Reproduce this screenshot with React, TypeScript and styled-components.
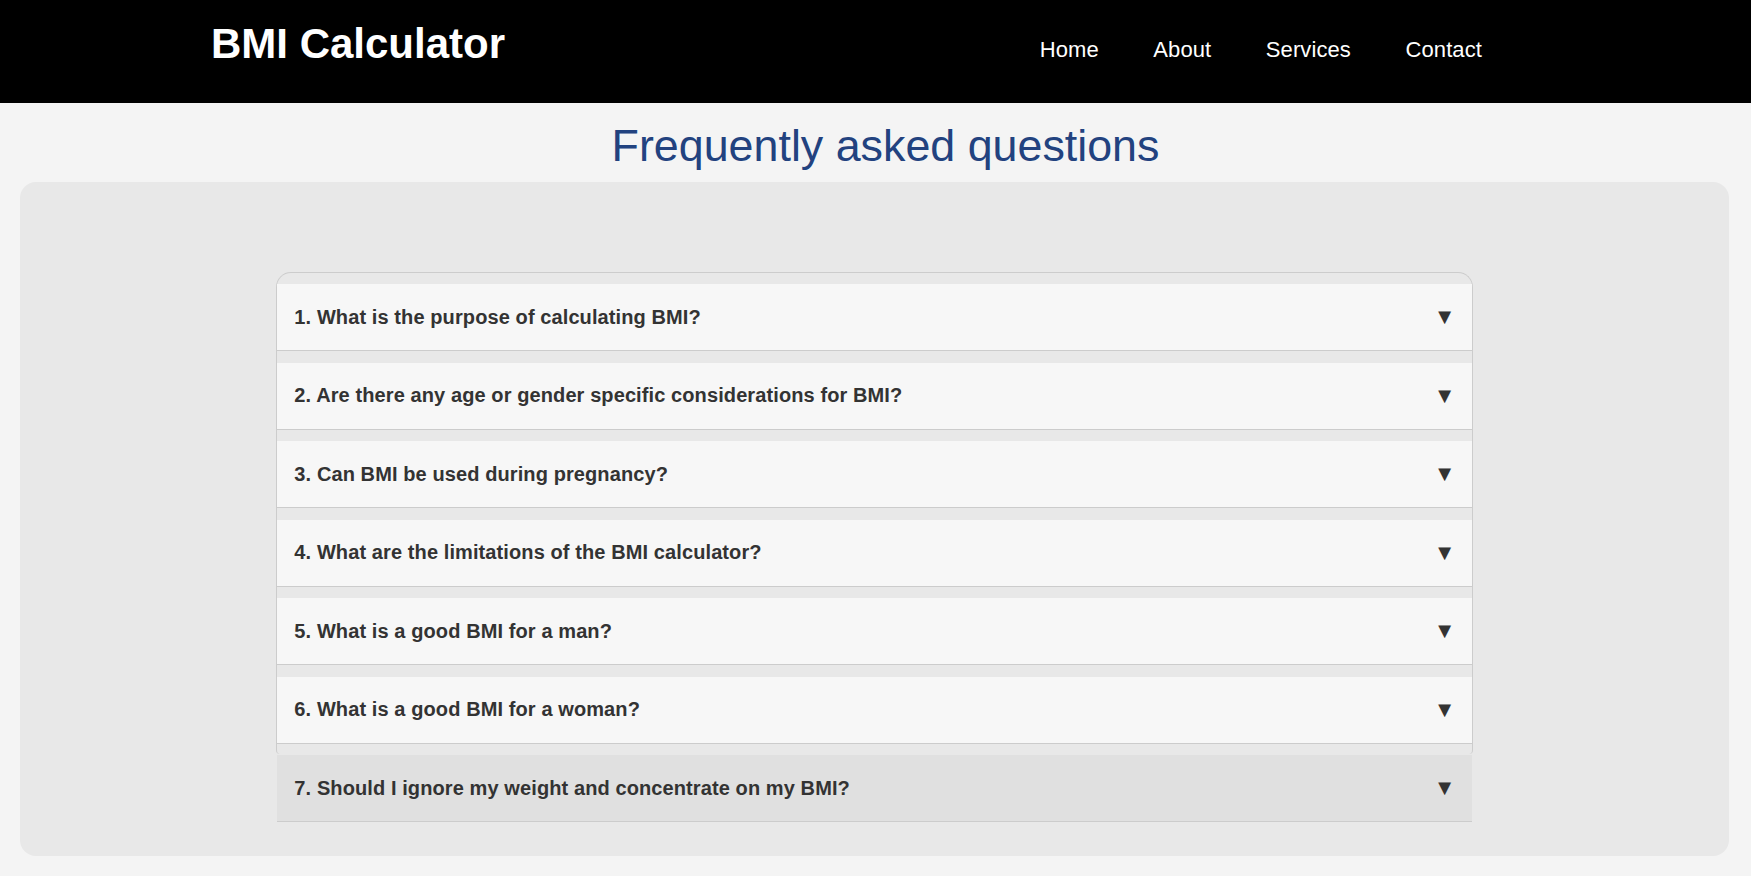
import React from "react";
import styled, { createGlobalStyle } from "styled-components";

const GlobalStyle = createGlobalStyle`
  html, body {
    margin: 0;
    padding: 0;
    background: #f4f4f4;
    font-family: "Liberation Sans", Arial, sans-serif;
  }
  * { box-sizing: border-box; }
`;

const Header = styled.header`
  display: flex;
  justify-content: space-between;
  align-items: flex-start;
  height: 103px;
  background: #000;
  padding: 0 269px 0 211px;
`;

const Logo = styled.h1`
  margin: 0;
  padding-top: 20px;
  color: #fff;
  font-size: 42px;
  font-weight: bold;
  line-height: normal;
`;

const Nav = styled.nav`
  display: flex;
  gap: 54.5px;
  padding-top: 37px;
`;

const NavLink = styled.a`
  color: #fff;
  font-size: 22px;
  line-height: normal;
  text-decoration: none;
  letter-spacing: 0.1px;
`;

const Title = styled.h2`
  margin: 17px 0 10.5px;
  padding-left: 20px;
  text-align: center;
  color: #22427f;
  font-size: 44.8px;
  font-weight: normal;
  line-height: normal;
`;

const Panel = styled.section`
  margin: 0 22px 0 20px;
  background: #e8e8e8;
  border-radius: 16px;
  padding: 90px 0 102px;
`;

const Accordion = styled.div`
  width: 70%;
  height: 482px;
  margin: 0 auto;
  border: 1px solid #ccc;
  border-bottom: none;
  border-radius: 15px 15px 4px 4px;
`;

const Item = styled.div<{ $active?: boolean }>`
  display: flex;
  justify-content: space-between;
  align-items: center;
  height: 67px;
  margin-top: 11.5px;
  padding: 0 16px 0 17px;
  background: ${(p) => (p.$active ? "#e0e0e0" : "#f7f7f7")};
  border-bottom: 1px solid #ccc;
  color: #333;
  font-size: 20px;
  font-weight: bold;
  letter-spacing: 0.1px;
  cursor: pointer;
`;

const Arrow = styled.span`
  font-size: 22px;
  color: #333;
  line-height: 1;
`;

const questions = [
  "1. What is the purpose of calculating BMI?",
  "2. Are there any age or gender specific considerations for BMI?",
  "3. Can BMI be used during pregnancy?",
  "4. What are the limitations of the BMI calculator?",
  "5. What is a good BMI for a man?",
  "6. What is a good BMI for a woman?",
  "7. Should I ignore my weight and concentrate on my BMI?",
];

export default function App() {
  return (
    <>
      <GlobalStyle />
      <Header>
        <Logo>BMI Calculator</Logo>
        <Nav>
          <NavLink href="#">Home</NavLink>
          <NavLink href="#">About</NavLink>
          <NavLink href="#">Services</NavLink>
          <NavLink href="#">Contact</NavLink>
        </Nav>
      </Header>
      <Title>Frequently asked questions</Title>
      <Panel>
        <Accordion>
          {questions.map((q, i) => (
            <Item key={q} $active={i === questions.length - 1}>
              <span>{q}</span>
              <Arrow>▼</Arrow>
            </Item>
          ))}
        </Accordion>
      </Panel>
    </>
  );
}
